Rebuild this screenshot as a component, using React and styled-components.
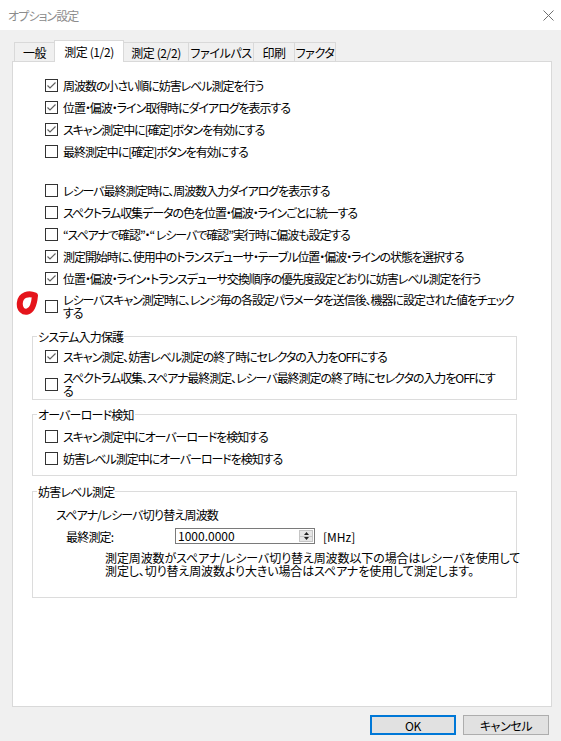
import React from "react";
import styled, { createGlobalStyle } from "styled-components";

const GlobalStyle = createGlobalStyle`
  html, body { margin: 0; padding: 0; background: #f0f0f0; }
  body {
    font-family: "Noto Sans CJK JP", "Noto Sans", sans-serif;
    font-size: 12px;
    color: #000;
  }
  #root { width: 561px; height: 741px; }
`;

const Window = styled.div`
  width: 561px;
  height: 741px;
  display: flex;
  flex-direction: column;
  background: #f0f0f0;
  overflow: hidden;
  font-feature-settings: "palt";
`;

const TitleBar = styled.div`
  flex: none;
  height: 30px;
  box-sizing: border-box;
  padding: 0 7px 0 8px;
  background: #fff;
  display: flex;
  align-items: center;
  justify-content: space-between;
`;

const Title = styled.div`
  color: #8c8c8c;
  font-size: 12px;
  line-height: 13px;
  letter-spacing: -0.9px;
`;

const CloseButton = styled.div`
  width: 12px;
  height: 12px;
  display: flex;
  align-items: center;
  justify-content: center;
`;

const Body = styled.div`
  flex: 1;
  min-height: 0;
  display: flex;
  flex-direction: column;
  padding: 10px 9px 6px 12px;
`;

const TabStrip = styled.div`
  flex: none;
  height: 21px;
  display: flex;
  align-items: flex-end;
  padding-left: 2px;
`;

const Tab = styled.div`
  box-sizing: border-box;
  width: ${(p) => p.$w}px;
  height: ${(p) => (p.$active ? 22 : 19)}px;
  margin-bottom: ${(p) => (p.$active ? -1 : 0)}px;
  margin-left: -1px;
  &:first-child { margin-left: 0; }
  border: 1px solid #d9d9d9;
  border-bottom: none;
  background: ${(p) => (p.$active ? "#fff" : "#f0f0f0")};
  position: relative;
  z-index: ${(p) => (p.$active ? 2 : 0)};
  display: flex;
  align-items: center;
  justify-content: center;
  font-size: 12px;
  line-height: 13px;
  letter-spacing: -0.4px;
  white-space: nowrap;
`;

const Panel = styled.div`
  flex: 1;
  box-sizing: border-box;
  border: 1px solid #d9d9d9;
  background: #fff;
  display: flex;
  flex-direction: column;
  padding-top: 12px;
`;

const CheckList = styled.div`
  display: flex;
  flex-direction: column;
  padding-left: 32px;
  margin-top: ${(p) => p.$top || 0}px;
`;

const Row = styled.label`
  position: relative;
  display: flex;
  align-items: center;
  min-height: 22px;
  box-sizing: border-box;
  padding-top: ${(p) => (p.$tall ? 4 : 0)}px;
  white-space: nowrap;
`;

const Box = styled.span`
  flex: none;
  width: 13px;
  height: 13px;
  box-sizing: border-box;
  border: 1px solid #333;
  background: #fff;
  margin-right: 5px;
  display: flex;
  align-items: center;
  justify-content: center;
`;

const Text = styled.span`
  font-size: 12px;
  line-height: 13px;
  letter-spacing: -1.05px;
`;

const Mark = styled.svg`
  position: absolute;
  left: -29px;
  top: 2px;
`;

const Group = styled.fieldset`
  margin: ${(p) => p.$top}px 0 0 19px;
  width: 485px;
  box-sizing: border-box;
  padding: 0;
  border: 1px solid #dcdcdc;
  min-width: 0;
`;

const Legend = styled.legend`
  margin-left: 4px;
  padding: 0 1px;
  font-size: 12px;
  line-height: 13px;
  letter-spacing: -0.8px;
`;

const GroupBody = styled.div`
  display: flex;
  flex-direction: column;
  padding: ${(p) => p.$pad};
`;

const PlainRow = styled.div`
  display: flex;
  align-items: center;
  min-height: 22px;
  padding-left: ${(p) => p.$indent || 0}px;
  font-size: 12px;
  line-height: 13px;
  letter-spacing: -0.8px;
  white-space: nowrap;
`;

const FieldLabel = styled.span`
  width: 109px;
  flex: none;
`;

const NumberBox = styled.div`
  width: 140px;
  height: 16px;
  box-sizing: border-box;
  border: 1px solid #7a7a7a;
  background: #fff;
  display: flex;
  align-items: stretch;
  padding: 0 1px 0 2px;
  letter-spacing: 0;
`;

const NumberText = styled.span`
  flex: 1;
  font-size: 12px;
  line-height: 14px;
`;

const Spinner = styled.div`
  width: 14px;
  flex: none;
  display: flex;
  flex-direction: column;
  margin: 1px 0;
  border: 1px solid #c5c5c5;
  box-sizing: border-box;
`;

const SpinHalf = styled.div`
  flex: 1;
  background: #e6e6e6;
  display: flex;
  align-items: center;
  justify-content: center;
  & + & { border-top: 1px solid #c5c5c5; }
`;

const Unit = styled.span`
  margin-left: 8px;
  letter-spacing: 0;
`;

const Note = styled.div`
  margin: 4px 0 0 49px;
  font-size: 12px;
  line-height: 13px;
  letter-spacing: -0.1px;
  white-space: nowrap;
`;

const Footer = styled.div`
  flex: none;
  display: flex;
  justify-content: flex-end;
  gap: 7px;
  margin: 8px 3px 0 0;
`;

const Button = styled.div`
  width: 86px;
  height: 20px;
  box-sizing: border-box;
  background: #e1e1e1;
  border: ${(p) => (p.$default ? "2px solid #0078d7" : "1px solid #adadad")};
  display: flex;
  align-items: center;
  justify-content: center;
  font-size: 12px;
  line-height: 13px;
  letter-spacing: -0.4px;
`;

const Check = ({ checked, children, tall, marked }) => (
  <Row $tall={tall}>
    {marked && (
      <Mark width="22" height="24" viewBox="0 0 22 24">
        <path
          d="M19 4.5 C13 1.8 4.5 3.5 3.8 12 C3.3 18.5 7.5 21.5 11.5 20.5 C16 19.5 18.3 12 19 4.5 Z"
          fill="none"
          stroke="#e5141b"
          strokeWidth="6"
          strokeLinejoin="round"
        />
      </Mark>
    )}
    <Box>
      {checked && (
        <svg width="11" height="11" viewBox="0 0 11 11">
          <polyline
            points="1.5,5.5 4,8 9.5,2.5"
            fill="none"
            stroke="#606060"
            strokeWidth="1.2"
          />
        </svg>
      )}
    </Box>
    <Text>{children}</Text>
  </Row>
);

const tabs = [
  { label: "一般", w: 41 },
  { label: "測定 (1/2)", w: 70, active: true },
  { label: "測定 (2/2)", w: 66 },
  { label: "ファイルパス", w: 66 },
  { label: "印刷", w: 42 },
  { label: "ファクタ", w: 42 },
];

export default function App() {
  return (
    <>
      <GlobalStyle />
      <Window>
        <TitleBar>
          <Title>オプション設定</Title>
          <CloseButton>
            <svg width="11" height="11" viewBox="0 0 11 11">
              <path d="M0.5 0.5 L10.5 10.5 M10.5 0.5 L0.5 10.5" stroke="#6f6f6f" strokeWidth="1" />
            </svg>
          </CloseButton>
        </TitleBar>
        <Body>
          <TabStrip>
            {tabs.map((t) => (
              <Tab key={t.label} $w={t.w} $active={t.active}>
                {t.label}
              </Tab>
            ))}
          </TabStrip>
          <Panel>
            <CheckList>
              <Check checked>周波数の小さい順に妨害レベル測定を行う</Check>
              <Check checked>位置・偏波・ライン取得時にダイアログを表示する</Check>
              <Check checked>スキャン測定中に[確定]ボタンを有効にする</Check>
              <Check>最終測定中に[確定]ボタンを有効にする</Check>
            </CheckList>
            <CheckList $top={17}>
              <Check>レシーバ最終測定時に、周波数入力ダイアログを表示する</Check>
              <Check>スペクトラム収集データの色を位置・偏波・ラインごとに統一する</Check>
              <Check>“スペアナで確認”・“ レシーバで確認”実行時に偏波も設定する</Check>
              <Check checked>測定開始時に、使用中のトランスデューサ・テーブル位置・偏波・ラインの状態を選択する</Check>
              <Check checked>位置・偏波・ライン・トランスデューサ交換順序の優先度設定どおりに妨害レベル測定を行う</Check>
              <Check tall marked>
                レシーバスキャン測定時に、レンジ毎の各設定パラメータを送信後、機器に設定された値をチェック
                <br />
                する
              </Check>
            </CheckList>

            <Group $top={11}>
              <Legend>システム入力保護</Legend>
              <GroupBody $pad="2px 0 2px 12px">
                <Check checked>スキャン測定、妨害レベル測定の終了時にセレクタの入力をOFFにする</Check>
                <Check tall>
                  スペクトラム収集、スペアナ最終測定、レシーバ最終測定の終了時にセレクタの入力をOFFにす
                  <br />
                  る
                </Check>
              </GroupBody>
            </Group>

            <Group $top={8}>
              <Legend>オーバーロード検知</Legend>
              <GroupBody $pad="4px 0 6px 12px">
                <Check>スキャン測定中にオーバーロードを検知する</Check>
                <Check>妨害レベル測定中にオーバーロードを検知する</Check>
              </GroupBody>
            </Group>

            <Group $top={9}>
              <Legend>妨害レベル測定</Legend>
              <GroupBody $pad="5px 0 20px 23px">
                <PlainRow>スペアナ/レシーバ切り替え周波数</PlainRow>
                <PlainRow $indent={10}>
                  <FieldLabel>最終測定:</FieldLabel>
                  <NumberBox>
                    <NumberText>1000.0000</NumberText>
                    <Spinner>
                      <SpinHalf>
                        <svg width="5" height="3" viewBox="0 0 5 3">
                          <path d="M2.5 0 L5 3 L0 3 Z" fill="#222" />
                        </svg>
                      </SpinHalf>
                      <SpinHalf>
                        <svg width="5" height="3" viewBox="0 0 5 3">
                          <path d="M0 0 L5 0 L2.5 3 Z" fill="#222" />
                        </svg>
                      </SpinHalf>
                    </Spinner>
                  </NumberBox>
                  <Unit>[MHz]</Unit>
                </PlainRow>
                <Note>
                  測定周波数がスペアナ/レシーバ切り替え周波数以下の場合はレシーバを使用して
                  <br />
                  測定し、切り替え周波数より大きい場合はスペアナを使用して測定します。
                </Note>
              </GroupBody>
            </Group>
          </Panel>
          <Footer>
            <Button $default>OK</Button>
            <Button>キャンセル</Button>
          </Footer>
        </Body>
      </Window>
    </>
  );
}
